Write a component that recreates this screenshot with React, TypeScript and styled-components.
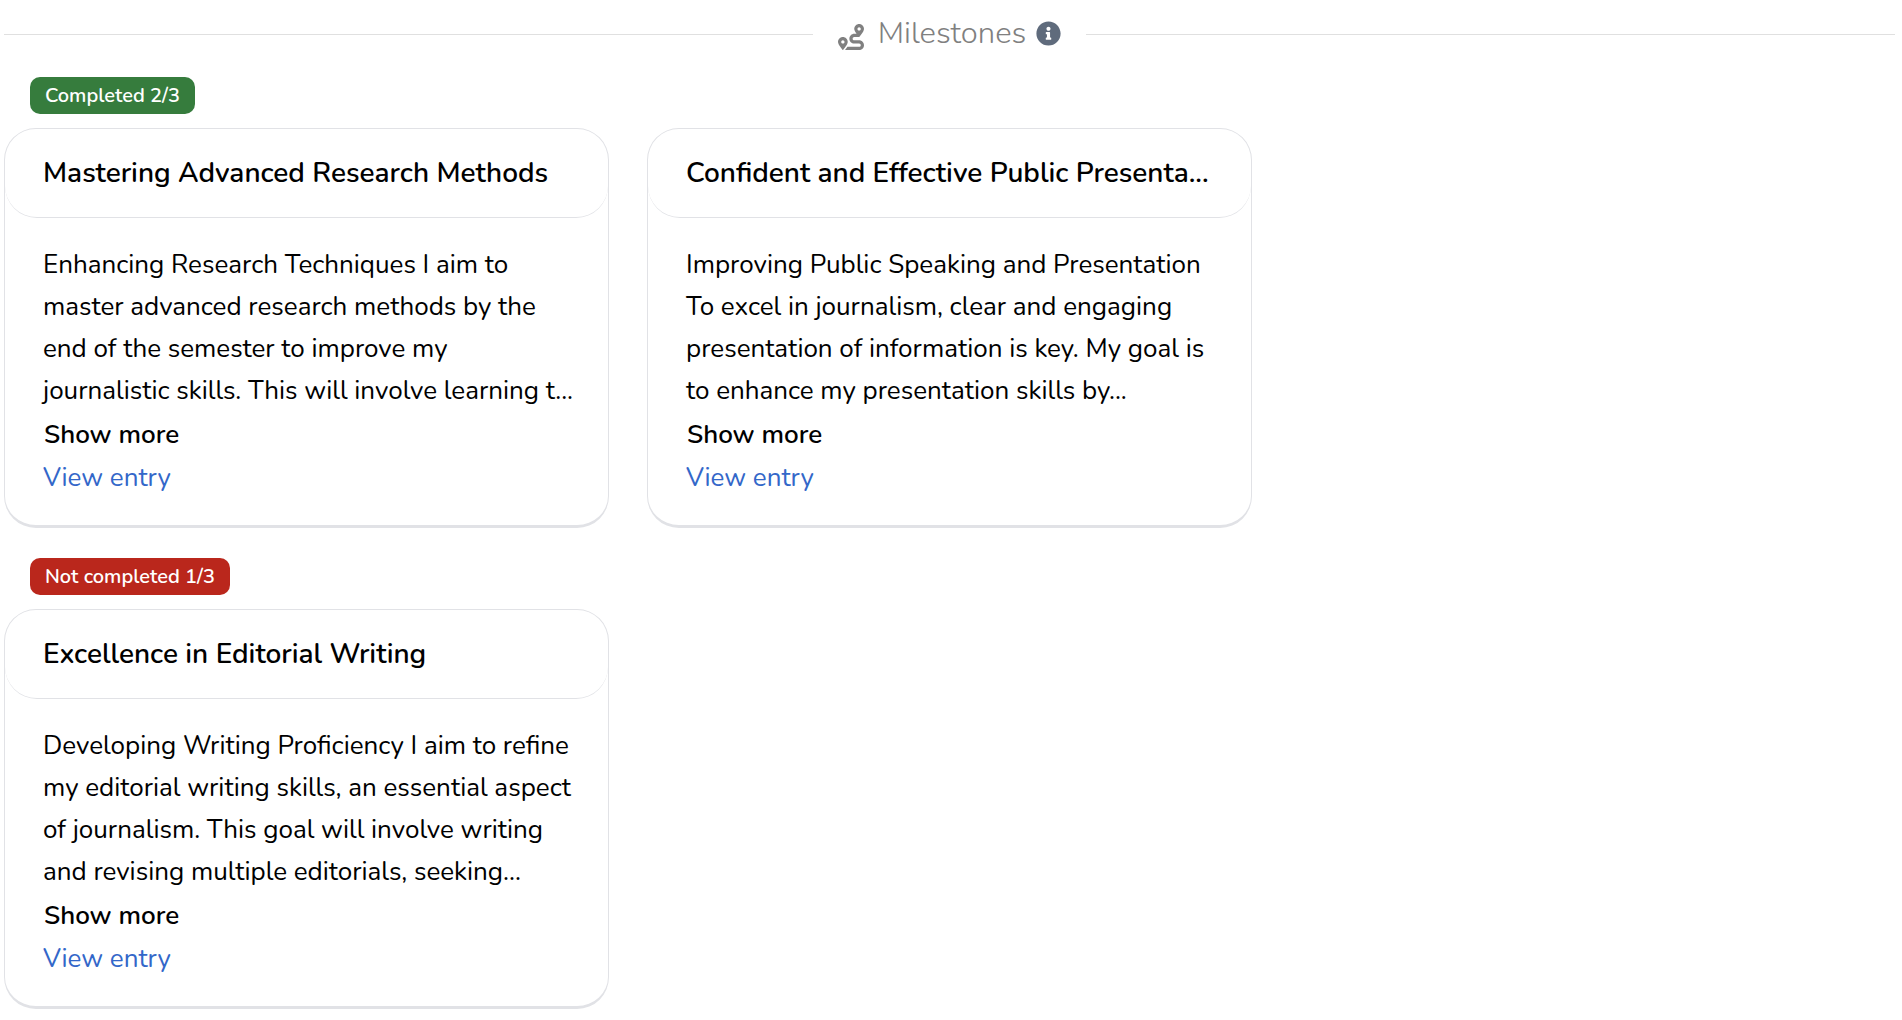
import React from "react";
import styled, { createGlobalStyle } from "styled-components";
import { FaInfoCircle, FaRoute } from "react-icons/fa";

const GlobalStyle = createGlobalStyle`
  * { box-sizing: border-box; }
  body {
    margin: 0;
    background: #fff;
    color: #000;
    font-family: Nunito, Lato, "Noto Sans", sans-serif;
    font-size: 26px;
    line-height: 42px;
  }
`;

const Page = styled.main`
  padding: 0 7px 9px 4px;
`;

const Divider = styled.header`
  display: flex;
  align-items: center;
  gap: 25px;
  height: 68px;
  &::before,
  &::after {
    content: "";
    flex: 1;
    height: 1px;
    background: #e0e0e0;
  }
`;

const DividerContent = styled.div`
  display: flex;
  align-items: center;
  color: #808080;
`;

const RouteIcon = styled(FaRoute)`
  width: 26px;
  height: 26px;
  margin: 5px 14px 0 0;
`;

const Heading = styled.h1`
  margin: 0;
  padding-bottom: 2px;
  font-size: 31px;
  font-weight: 300;
  line-height: 40px;
`;

const InfoButton = styled.button`
  display: flex;
  margin-left: 10px;
  padding: 0 0 2px;
  border: 0;
  background: none;
  color: #5f6b7c;
  font-size: 25px;
`;

const Group = styled.section`
  padding-top: 9px;
  & + & {
    padding-top: 30px;
  }
`;

const Badge = styled.h2<{ $done: boolean }>`
  width: fit-content;
  margin: 0 0 14px 26px;
  padding: 0 15px;
  border-radius: 10px;
  background: ${(p) => (p.$done ? "#367c3d" : "#ba271c")};
  color: #fff;
  font-size: 20px;
  font-weight: 600;
  line-height: 37px;
`;

const Cards = styled.div`
  display: grid;
  grid-template-columns: repeat(3, minmax(0, 1fr));
  gap: 38px;
`;

const Card = styled.article`
  border: 1px solid #e1e2e6;
  border-bottom-width: 3px;
  border-radius: 32px;
`;

const CardHeader = styled.div`
  padding: 23px 38px;
  border-bottom: 1px solid #e1e2e6;
  border-radius: 32px;
`;

const CardTitle = styled.h3`
  margin: 0;
  overflow: hidden;
  font-size: 28px;
  font-weight: 600;
  line-height: 42px;
  text-overflow: ellipsis;
  white-space: nowrap;
`;

const CardBody = styled.div`
  display: flex;
  flex-direction: column;
  align-items: flex-start;
  padding: 26px 38px;
`;

const Summary = styled.p`
  margin: 0;
`;

const Line = styled.span`
  display: block;
  white-space: nowrap;
`;

const ShowMore = styled.button`
  padding: 2px 1px 1px;
  border: 0;
  background: none;
  color: inherit;
  font: inherit;
  font-weight: 600;
`;

const EntryLink = styled.a`
  color: #3367c9;
  text-decoration: none;
`;

type Milestone = { title: string; lines: string[] };

const groups: { done: boolean; label: string; items: Milestone[] }[] = [
  {
    done: true,
    label: "Completed 2/3",
    items: [
      {
        title: "Mastering Advanced Research Methods",
        lines: [
          "Enhancing Research Techniques I aim to",
          "master advanced research methods by the",
          "end of the semester to improve my",
          "journalistic skills. This will involve learning t...",
        ],
      },
      {
        title: "Confident and Effective Public Presenta...",
        lines: [
          "Improving Public Speaking and Presentation",
          "To excel in journalism, clear and engaging",
          "presentation of information is key. My goal is",
          "to enhance my presentation skills by...",
        ],
      },
    ],
  },
  {
    done: false,
    label: "Not completed 1/3",
    items: [
      {
        title: "Excellence in Editorial Writing",
        lines: [
          "Developing Writing Proficiency I aim to refine",
          "my editorial writing skills, an essential aspect",
          "of journalism. This goal will involve writing",
          "and revising multiple editorials, seeking...",
        ],
      },
    ],
  },
];

function MilestoneCard({ title, lines }: Milestone) {
  return (
    <Card>
      <CardHeader>
        <CardTitle>{title}</CardTitle>
      </CardHeader>
      <CardBody>
        <Summary>
          {lines.map((line) => (
            <Line key={line}>{line}</Line>
          ))}
        </Summary>
        <ShowMore type="button">Show more</ShowMore>
        <EntryLink href="#entry">View entry</EntryLink>
      </CardBody>
    </Card>
  );
}

export default function App() {
  return (
    <>
      <GlobalStyle />
      <Page>
        <Divider>
          <DividerContent>
            <RouteIcon aria-hidden />
            <Heading>Milestones</Heading>
            <InfoButton type="button" aria-label="About milestones">
              <FaInfoCircle />
            </InfoButton>
          </DividerContent>
        </Divider>
        {groups.map((group) => (
          <Group key={group.label}>
            <Badge $done={group.done}>{group.label}</Badge>
            <Cards>
              {group.items.map((item) => (
                <MilestoneCard key={item.title} {...item} />
              ))}
            </Cards>
          </Group>
        ))}
      </Page>
    </>
  );
}
